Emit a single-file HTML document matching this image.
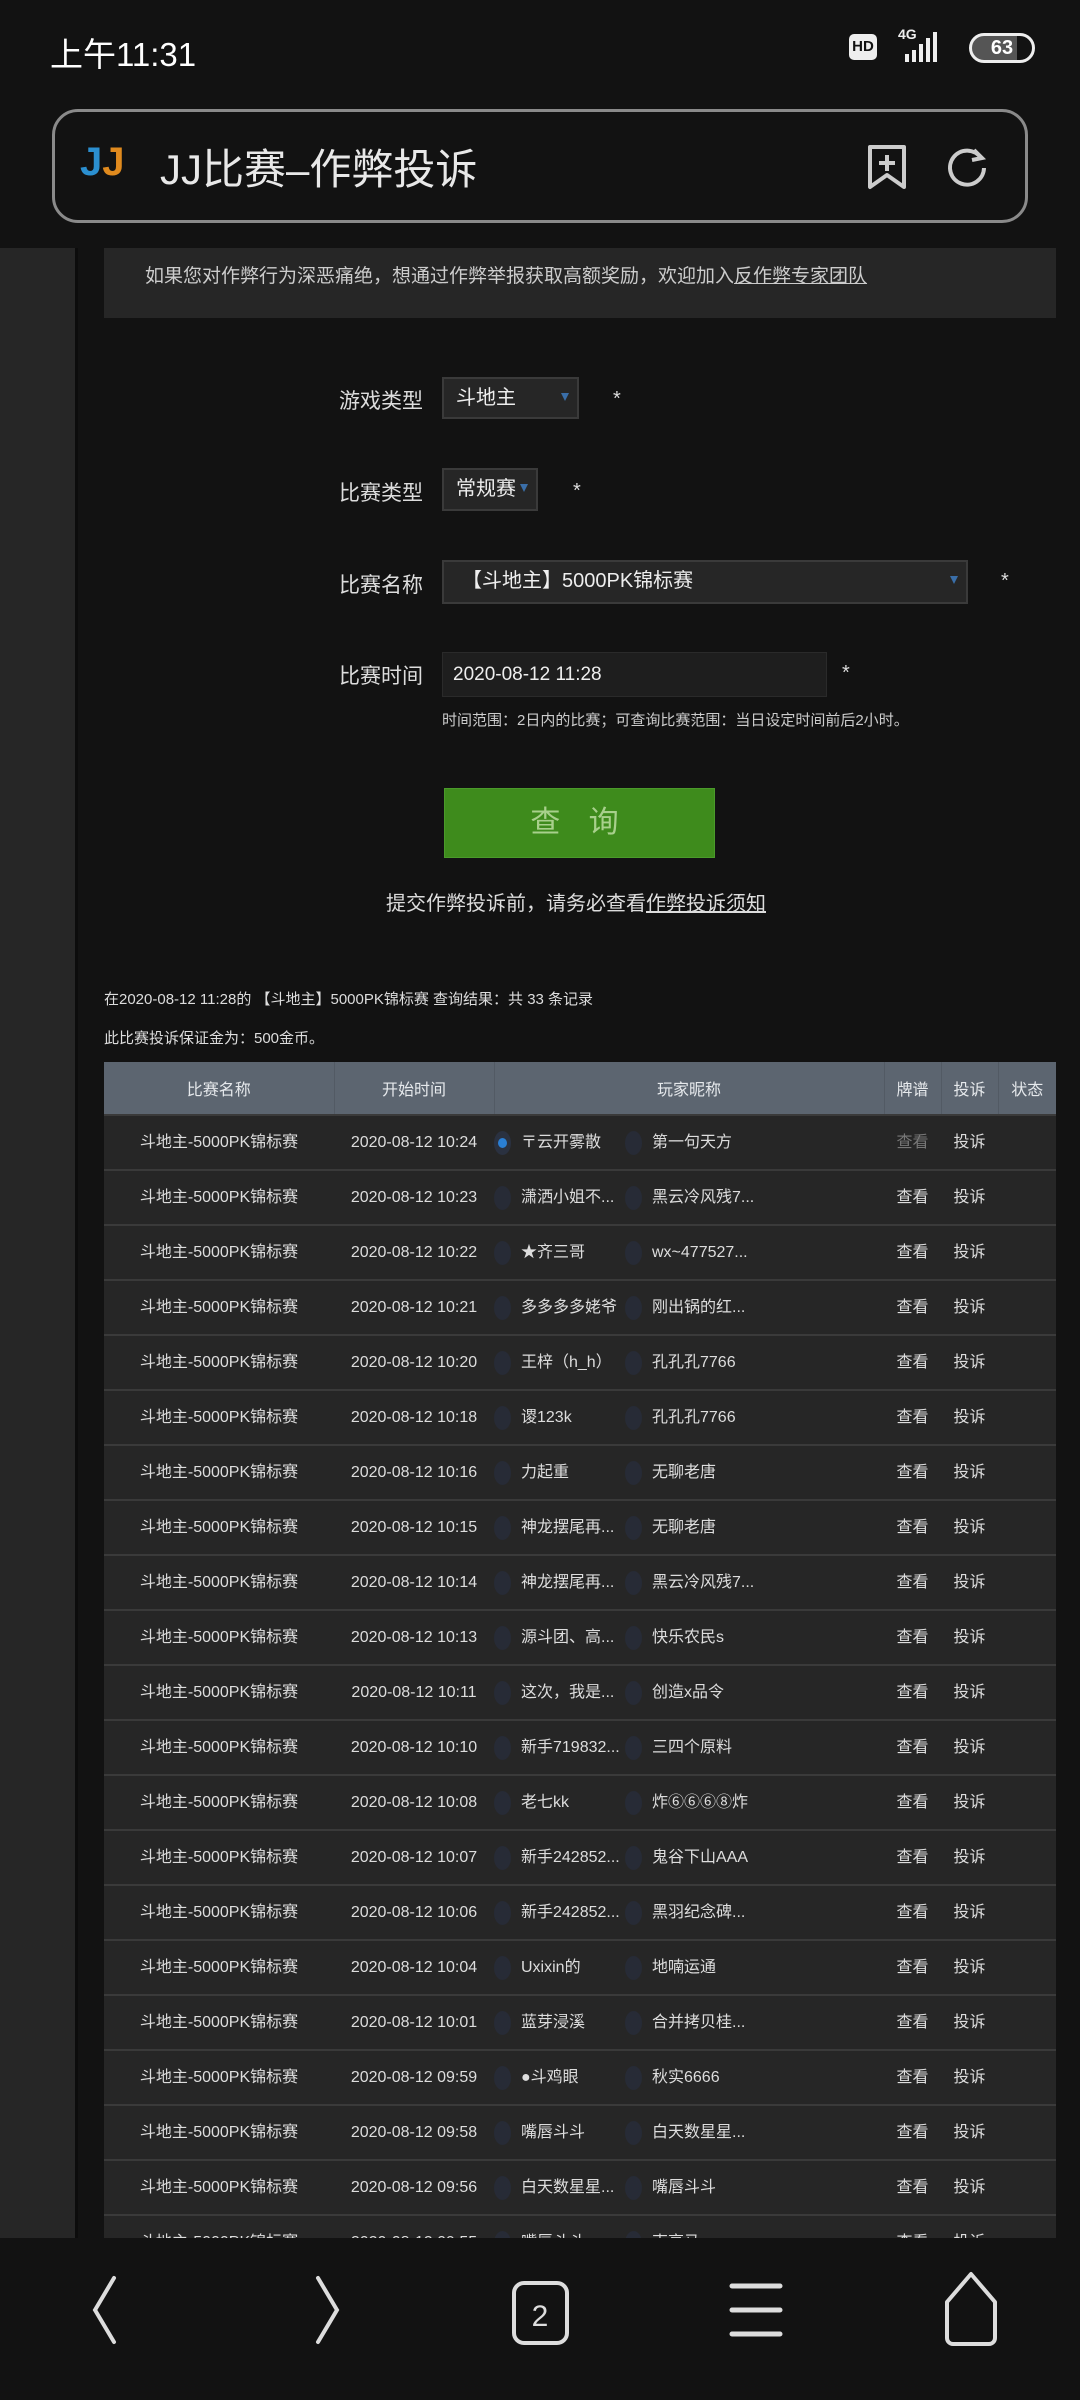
<!DOCTYPE html>
<html><head><meta charset="utf-8"><style>
*{margin:0;padding:0;box-sizing:border-box}
body{width:1080px;height:2400px;background:#121212;position:relative;overflow:hidden;font-family:"Liberation Sans","Noto Sans CJK SC",sans-serif;color:#ddd}
.a{position:absolute;white-space:nowrap}
.side{left:0;top:248px;width:78px;height:1990px;background:#262626;border-right:3px solid #0c0c0c}
.lbl{font-size:21px;color:#ddd}
.sel{background:#262626;border:2px solid #3a3a3a;font-size:20px;color:#eee;padding-left:12px;line-height:38px}
.sel i{position:absolute;right:8px;top:14px;width:0;height:0;border-left:4px solid transparent;border-right:4px solid transparent;border-top:8px solid #3a6ea8}
.star{font-size:20px;color:#ddd}
table{position:absolute;left:104px;top:1062px;width:952px;border-collapse:collapse;font-size:16px;color:#ddd;table-layout:fixed}
th{background:#5c6570;height:53px;font-weight:normal;color:#e6e9ec;border-right:1px solid #525a64}
td{background:#262626;height:55px;border-top:2px solid #3a3a3a;text-align:center;vertical-align:middle;white-space:nowrap;line-height:20px;overflow:hidden}
.p{text-align:left}
.c{display:inline-block;width:17px;height:24px;border-radius:50%;background:#272b36;vertical-align:middle;margin-right:10px}
.c.on{background:#2a3140;position:relative}
.c.on:after{content:"";position:absolute;left:4px;top:7px;width:9px;height:10px;border-radius:50%;background:#2a7fd4}
.pn{display:inline-block;width:104px;vertical-align:middle;overflow:hidden;line-height:24px;height:24px}
</style></head><body>
<div class="a" style="left:50px;top:28px;font-size:33px;color:#fff">上午11:31</div>
<div class="a" style="left:849px;top:34px;width:28px;height:26px;background:#eee;border-radius:5px;color:#111;font-size:15px;font-weight:bold;text-align:center;line-height:26px">HD</div>
<div class="a" style="left:898px;top:26px;font-size:14px;color:#eee;font-weight:bold">4G</div>
<svg class="a" style="left:895px;top:30px" width="58" height="34"><rect x="10" y="24" width="4" height="8" fill="#eee"/><rect x="17" y="20" width="4" height="12" fill="#eee"/><rect x="24" y="14" width="4" height="18" fill="#eee"/><rect x="31" y="8" width="4" height="24" fill="#eee"/><rect x="38" y="2" width="4" height="30" fill="#eee"/></svg>
<div class="a" style="left:969px;top:33px;width:66px;height:30px;border:3px solid #eee;border-radius:15px;color:#fff;font-size:20px;font-weight:bold;text-align:center;line-height:24px;background:linear-gradient(90deg,#555 0 75%,#121212 75%)">63</div>
<div class="a" style="left:52px;top:109px;width:976px;height:114px;border:3px solid #8a8a8a;border-radius:26px"></div>
<div class="a" style="left:80px;top:140px;font-size:40px;font-weight:bold"><span style="color:#2b8fd0">J</span><span style="color:#e08a1e">J</span></div>
<div class="a" style="left:160px;top:136px;font-size:42px;color:#e8e8e8">JJ比赛–作弊投诉</div>
<svg class="a" style="left:866px;top:143px" width="42" height="48"><path d="M4 4h34v40l-17-12-17 12z" fill="none" stroke="#ccc" stroke-width="4" stroke-linejoin="round"/><path d="M21 12v16M13 20h16" stroke="#ccc" stroke-width="4"/></svg>
<svg class="a" style="left:944px;top:144px" width="46" height="46"><path d="M37 14A17 17 0 1 0 40 24" fill="none" stroke="#ccc" stroke-width="4"/><path d="M30 6l8 8-10 2" fill="none" stroke="#ccc" stroke-width="4"/></svg>
<div class="a side"></div>
<div class="a" style="left:104px;top:248px;width:952px;height:70px;background:#262626"></div>
<div class="a" style="left:145px;top:261px;font-size:19px;color:#ccc">如果您对作弊行为深恶痛绝，想通过作弊举报获取高额奖励，欢迎加入<u>反作弊专家团队</u></div>
<div class="a lbl" style="left:339px;top:385px">游戏类型</div>
<div class="a sel" style="left:442px;top:377px;width:137px;height:42px">斗地主<i></i></div>
<div class="a star" style="left:613px;top:388px">*</div>
<div class="a lbl" style="left:339px;top:477px">比赛类型</div>
<div class="a sel" style="left:442px;top:468px;width:96px;height:43px">常规赛<i></i></div>
<div class="a star" style="left:573px;top:480px">*</div>
<div class="a lbl" style="left:339px;top:569px">比赛名称</div>
<div class="a sel" style="left:442px;top:560px;width:526px;height:44px;padding-left:18px">【斗地主】5000PK锦标赛<i></i></div>
<div class="a star" style="left:1001px;top:570px">*</div>
<div class="a lbl" style="left:339px;top:660px">比赛时间</div>
<div class="a" style="left:442px;top:652px;width:385px;height:45px;background:#1e1e1e;border:1px solid #2a2a2a;font-size:19px;color:#eee;padding-left:10px;line-height:43px">2020-08-12 11:28</div>
<div class="a star" style="left:842px;top:662px">*</div>
<div class="a" style="left:442px;top:709px;font-size:15px;color:#ccc">时间范围：2日内的比赛；可查询比赛范围：当日设定时间前后2小时。</div>
<div class="a" style="left:444px;top:788px;width:271px;height:70px;background:#3e8b1c;border:1px solid #4a9a2a;color:#a8d08c;font-size:30px;text-align:center;line-height:68px;letter-spacing:10px">查 询</div>
<div class="a" style="left:386px;top:887px;font-size:20px;color:#ddd">提交作弊投诉前，请务必查看<u>作弊投诉须知</u></div>
<div class="a" style="left:104px;top:988px;font-size:15px;color:#ddd">在2020-08-12 11:28的 【斗地主】5000PK锦标赛 查询结果：共 33 条记录</div>
<div class="a" style="left:104px;top:1027px;font-size:15px;color:#ddd">此比赛投诉保证金为：500金币。</div>
<table>
<colgroup><col style="width:230px"><col style="width:160px"><col style="width:390px"><col style="width:57px"><col style="width:57px"><col></colgroup>
<tr><th>比赛名称</th><th>开始时间</th><th>玩家昵称</th><th>牌谱</th><th>投诉</th><th style="border-right:0">状态</th></tr>
<tr><td>斗地主-5000PK锦标赛</td><td>2020-08-12 10:24</td><td class="p"><span class="c on"></span><span class="pn">〒云开雾散</span><span class="c"></span><span class="pn">第一句天方</span></td><td style="color:#777">查看</td><td>投诉</td><td></td></tr>
<tr><td>斗地主-5000PK锦标赛</td><td>2020-08-12 10:23</td><td class="p"><span class="c"></span><span class="pn">潇洒小姐不...</span><span class="c"></span><span class="pn">黑云冷风残7...</span></td><td>查看</td><td>投诉</td><td></td></tr>
<tr><td>斗地主-5000PK锦标赛</td><td>2020-08-12 10:22</td><td class="p"><span class="c"></span><span class="pn">★齐三哥</span><span class="c"></span><span class="pn">wx~477527...</span></td><td>查看</td><td>投诉</td><td></td></tr>
<tr><td>斗地主-5000PK锦标赛</td><td>2020-08-12 10:21</td><td class="p"><span class="c"></span><span class="pn">多多多多姥爷</span><span class="c"></span><span class="pn">刚出锅的红...</span></td><td>查看</td><td>投诉</td><td></td></tr>
<tr><td>斗地主-5000PK锦标赛</td><td>2020-08-12 10:20</td><td class="p"><span class="c"></span><span class="pn">王梓（h_h）</span><span class="c"></span><span class="pn">孔孔孔7766</span></td><td>查看</td><td>投诉</td><td></td></tr>
<tr><td>斗地主-5000PK锦标赛</td><td>2020-08-12 10:18</td><td class="p"><span class="c"></span><span class="pn">谡123k</span><span class="c"></span><span class="pn">孔孔孔7766</span></td><td>查看</td><td>投诉</td><td></td></tr>
<tr><td>斗地主-5000PK锦标赛</td><td>2020-08-12 10:16</td><td class="p"><span class="c"></span><span class="pn">力起重</span><span class="c"></span><span class="pn">无聊老唐</span></td><td>查看</td><td>投诉</td><td></td></tr>
<tr><td>斗地主-5000PK锦标赛</td><td>2020-08-12 10:15</td><td class="p"><span class="c"></span><span class="pn">神龙摆尾再...</span><span class="c"></span><span class="pn">无聊老唐</span></td><td>查看</td><td>投诉</td><td></td></tr>
<tr><td>斗地主-5000PK锦标赛</td><td>2020-08-12 10:14</td><td class="p"><span class="c"></span><span class="pn">神龙摆尾再...</span><span class="c"></span><span class="pn">黑云冷风残7...</span></td><td>查看</td><td>投诉</td><td></td></tr>
<tr><td>斗地主-5000PK锦标赛</td><td>2020-08-12 10:13</td><td class="p"><span class="c"></span><span class="pn">源斗团、高...</span><span class="c"></span><span class="pn">快乐农民s</span></td><td>查看</td><td>投诉</td><td></td></tr>
<tr><td>斗地主-5000PK锦标赛</td><td>2020-08-12 10:11</td><td class="p"><span class="c"></span><span class="pn">这次，我是...</span><span class="c"></span><span class="pn">创造x品令</span></td><td>查看</td><td>投诉</td><td></td></tr>
<tr><td>斗地主-5000PK锦标赛</td><td>2020-08-12 10:10</td><td class="p"><span class="c"></span><span class="pn">新手719832...</span><span class="c"></span><span class="pn">三四个原料</span></td><td>查看</td><td>投诉</td><td></td></tr>
<tr><td>斗地主-5000PK锦标赛</td><td>2020-08-12 10:08</td><td class="p"><span class="c"></span><span class="pn">老七kk</span><span class="c"></span><span class="pn">炸⑥⑥⑥⑧炸</span></td><td>查看</td><td>投诉</td><td></td></tr>
<tr><td>斗地主-5000PK锦标赛</td><td>2020-08-12 10:07</td><td class="p"><span class="c"></span><span class="pn">新手242852...</span><span class="c"></span><span class="pn">鬼谷下山AAA</span></td><td>查看</td><td>投诉</td><td></td></tr>
<tr><td>斗地主-5000PK锦标赛</td><td>2020-08-12 10:06</td><td class="p"><span class="c"></span><span class="pn">新手242852...</span><span class="c"></span><span class="pn">黑羽纪念碑...</span></td><td>查看</td><td>投诉</td><td></td></tr>
<tr><td>斗地主-5000PK锦标赛</td><td>2020-08-12 10:04</td><td class="p"><span class="c"></span><span class="pn">Uxixin的</span><span class="c"></span><span class="pn">地喃运通</span></td><td>查看</td><td>投诉</td><td></td></tr>
<tr><td>斗地主-5000PK锦标赛</td><td>2020-08-12 10:01</td><td class="p"><span class="c"></span><span class="pn">蓝芽浸溪</span><span class="c"></span><span class="pn">合并拷贝桂...</span></td><td>查看</td><td>投诉</td><td></td></tr>
<tr><td>斗地主-5000PK锦标赛</td><td>2020-08-12 09:59</td><td class="p"><span class="c"></span><span class="pn">●斗鸡眼</span><span class="c"></span><span class="pn">秋实6666</span></td><td>查看</td><td>投诉</td><td></td></tr>
<tr><td>斗地主-5000PK锦标赛</td><td>2020-08-12 09:58</td><td class="p"><span class="c"></span><span class="pn">嘴唇斗斗</span><span class="c"></span><span class="pn">白天数星星...</span></td><td>查看</td><td>投诉</td><td></td></tr>
<tr><td>斗地主-5000PK锦标赛</td><td>2020-08-12 09:56</td><td class="p"><span class="c"></span><span class="pn">白天数星星...</span><span class="c"></span><span class="pn">嘴唇斗斗</span></td><td>查看</td><td>投诉</td><td></td></tr>
<tr><td>斗地主-5000PK锦标赛</td><td>2020-08-12 09:55</td><td class="p"><span class="c"></span><span class="pn">嘴唇斗斗</span><span class="c"></span><span class="pn">克亮马</span></td><td>查看</td><td>投诉</td><td></td></tr>
</table>
<div class="a" style="left:0;top:2238px;width:1080px;height:162px;background:#121212"></div>
<svg class="a" style="left:0;top:2238px" width="1080" height="162">
<path d="M114 40L95 72l19 32" fill="none" stroke="#ddd" stroke-width="4" stroke-linecap="round"/>
<path d="M318 40l19 32-19 32" fill="none" stroke="#ddd" stroke-width="4" stroke-linecap="round"/>
<rect x="514" y="45" width="53" height="60" rx="10" fill="none" stroke="#ddd" stroke-width="4"/>
<text x="540" y="88" font-size="30" fill="#ddd" text-anchor="middle" font-family="Liberation Sans">2</text>
<path d="M732 48h48M732 72h48M732 96h48" stroke="#ddd" stroke-width="5" stroke-linecap="round"/>
<path d="M971 36l24 28v36a6 6 0 0 1-6 6h-36a6 6 0 0 1-6-6V64z" fill="none" stroke="#ddd" stroke-width="4" stroke-linejoin="round"/>
</svg>
</body></html>
